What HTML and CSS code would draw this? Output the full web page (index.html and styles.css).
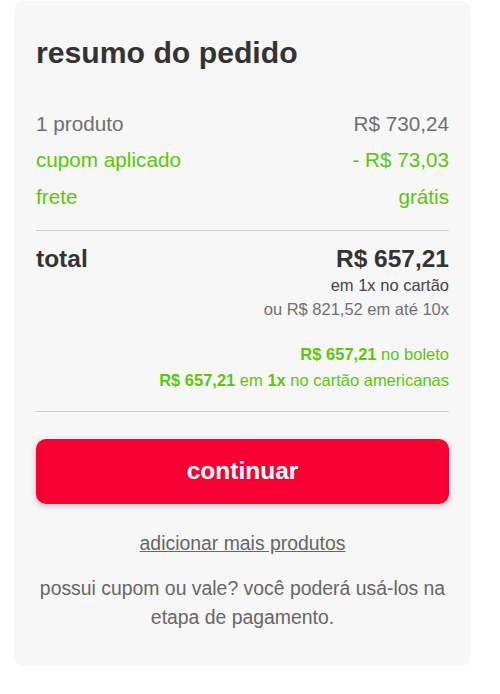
FILE: index.html
```html
<!DOCTYPE html>
<html lang="pt-BR">
<head>
    <meta charset="UTF-8">
    <meta name="viewport" content="width=device-width, initial-scale=1.0">
    <title>Resumo do pedido</title>
    <link rel="stylesheet" href="styles.css">
</head>
<body>
    <div class="summary">
        <h2 class="summary-title">resumo do pedido</h2>

        <div class="lines">
            <div class="line">
                <span>1 produto</span>
                <span>R$ 730,24</span>
            </div>
            <div class="line line-green">
                <span>cupom aplicado</span>
                <span>- R$ 73,03</span>
            </div>
            <div class="line line-green">
                <span>frete</span>
                <span>grátis</span>
            </div>
        </div>

        <div class="divider"></div>

        <div class="total-row">
            <span class="total-label">total</span>
            <div class="total-values">
                <div class="total-price">R$ 657,21</div>
                <div class="total-sub">em 1x no cartão</div>
                <div class="total-alt">ou R$ 821,52 em até 10x</div>
            </div>
        </div>

        <div class="offers">
            <div><strong>R$ 657,21</strong> no boleto</div>
            <div><strong>R$ 657,21</strong> em <strong>1x</strong> no cartão americanas</div>
        </div>

        <div class="divider divider-bottom"></div>

        <button class="btn-continue">continuar</button>

        <a href="#" class="add-more">adicionar mais produtos</a>

        <p class="coupon-note">possui cupom ou vale? você poderá usá-los na etapa de pagamento.</p>
    </div>
</body>
</html>
```

FILE: styles.css
```css
* {
    margin: 0;
    padding: 0;
    box-sizing: border-box;
}

body {
    font-family: "Liberation Sans", Arial, sans-serif;
    background: #fff;
    color: #333;
}

.summary {
    width: 457px;
    margin: 1px 0 0 14px;
    padding: 35px 22px 35px;
    background: #f7f7f7;
    border-radius: 10px;
}

.summary-title {
    font-size: 30.2px;
    line-height: 33px;
    font-weight: 700;
    color: #333;
}

.lines {
    margin-top: 37px;
}

.line {
    display: flex;
    justify-content: space-between;
    font-size: 20.7px;
    line-height: 36.3px;
    color: #707070;
}

.line-green {
    color: #5ac80a;
}

.divider {
    height: 1px;
    background: #cfcfcf;
    margin: 15px 0 14px;
}

.total-row {
    display: flex;
    justify-content: space-between;
    align-items: flex-start;
}

.total-label,
.total-price {
    font-size: 24.5px;
    line-height: 28px;
    font-weight: 700;
    color: #333;
}

.total-values {
    text-align: right;
}

.total-sub,
.total-alt {
    font-size: 16.5px;
    line-height: 24px;
}

.total-sub {
    color: #444;
}

.total-alt {
    color: #707070;
}

.offers {
    margin-top: 20px;
    text-align: right;
    font-size: 16.5px;
    line-height: 26px;
    color: #5ac80a;
}

.divider-bottom {
    margin: 18px 0 27px;
}

.btn-continue {
    display: block;
    width: 100%;
    height: 65px;
    border: none;
    border-radius: 10px;
    background: #f80032;
    color: #fff;
    font-family: inherit;
    font-size: 24.5px;
    font-weight: 700;
    box-shadow: 0 2px 6px rgba(0, 0, 0, 0.22);
    cursor: pointer;
}

.add-more {
    display: block;
    margin-top: 27px;
    text-align: center;
    font-size: 19.4px;
    line-height: 24px;
    color: #666;
    text-decoration: underline;
}

.coupon-note {
    margin-top: 19.5px;
    text-align: center;
    font-size: 19.4px;
    line-height: 28.5px;
    color: #666;
}
```
